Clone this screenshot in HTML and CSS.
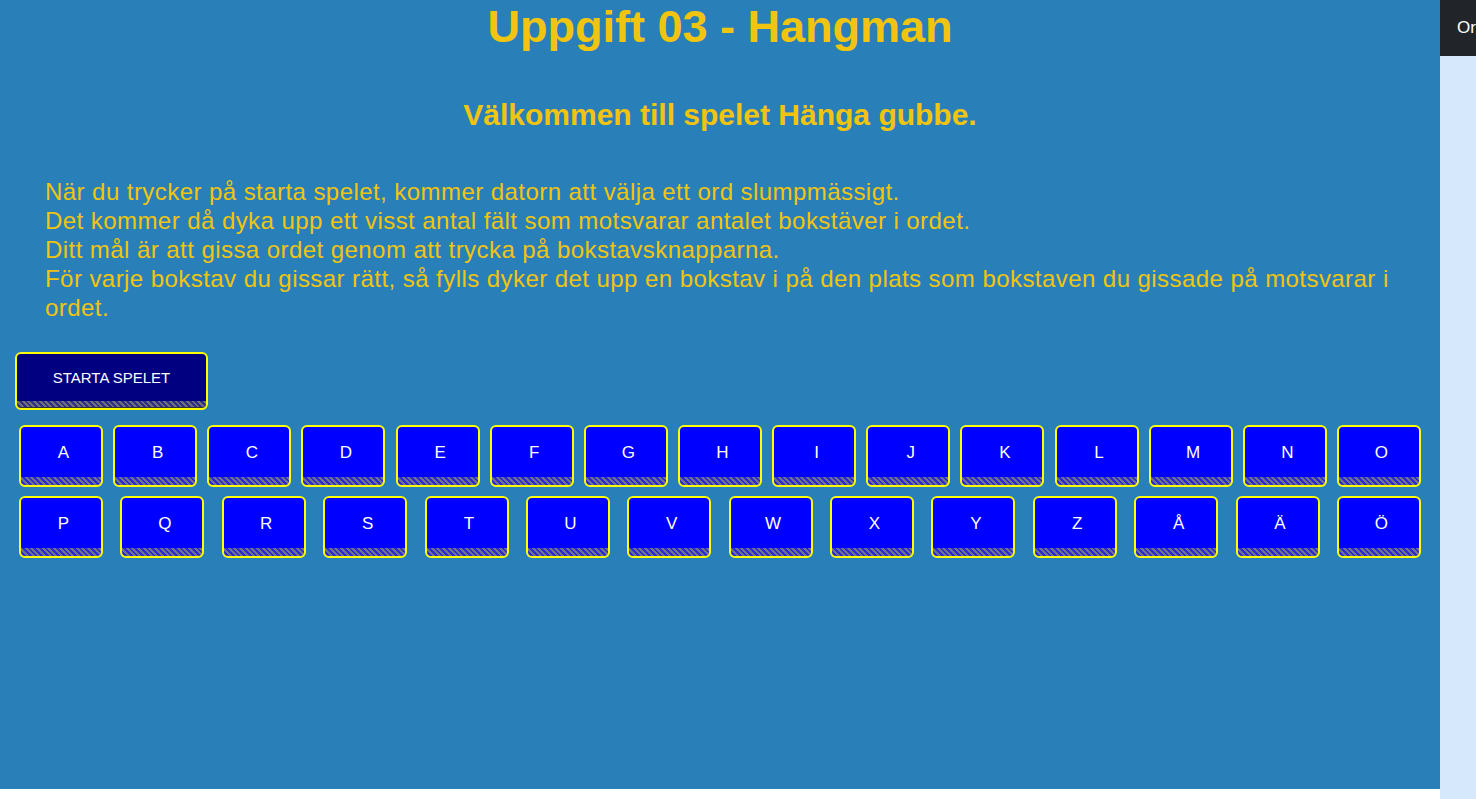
FILE: index.html
```html
<!DOCTYPE html>
<html lang="sv">
<head>
<meta charset="utf-8">
<title>Uppgift 03 - Hangman</title>
<link rel="stylesheet" href="styles.css">
</head>
<body>
<div class="page">
  <main class="main">
    <h1 class="title">Uppgift 03 - Hangman</h1>
    <h2 class="subtitle">Välkommen till spelet Hänga gubbe.</h2>
    <p class="intro">När du trycker på starta spelet, kommer datorn att välja ett ord slumpmässigt.<br>Det kommer då dyka upp ett visst antal fält som motsvarar antalet bokstäver i ordet.<br>Ditt mål är att gissa ordet genom att trycka på bokstavsknapparna.<br>För varje bokstav du gissar rätt, så fylls dyker det upp en bokstav i på den plats som bokstaven du gissade på motsvarar i ordet.</p>
    <div class="start-wrap"><button class="start">STARTA SPELET</button></div>
    <div class="letters">
      <div class="row">
        <button class="key">A</button><button class="key">B</button><button class="key">C</button><button class="key">D</button><button class="key">E</button><button class="key">F</button><button class="key">G</button><button class="key">H</button><button class="key">I</button><button class="key">J</button><button class="key">K</button><button class="key">L</button><button class="key">M</button><button class="key">N</button><button class="key">O</button>
      </div>
      <div class="row">
        <button class="key">P</button><button class="key">Q</button><button class="key">R</button><button class="key">S</button><button class="key">T</button><button class="key">U</button><button class="key">V</button><button class="key">W</button><button class="key">X</button><button class="key">Y</button><button class="key">Z</button><button class="key">Å</button><button class="key">Ä</button><button class="key">Ö</button>
      </div>
    </div>
  </main>
  <aside class="side">
    <div class="side-head">Or</div>
  </aside>
</div>
</body>
</html>
```

FILE: styles.css
```css
html, body {
  margin: 0;
  padding: 0;
  background: #ffffff;
}
body {
  font-family: "Liberation Sans", Arial, sans-serif;
  overflow: hidden;
}
.page {
  display: flex;
  height: 799px;
  align-items: flex-start;
}
.main {
  width: 1440px;
  height: 789px;
  background: #2980b9;
  color: #f1c40f;
  flex: none;
}
.title {
  margin: 0;
  padding-top: 1px;
  font-size: 45px;
  font-weight: bold;
  text-align: center;
  line-height: 52px;
}
.subtitle {
  margin: 44px 0 0;
  font-size: 30px;
  font-weight: bold;
  text-align: center;
  line-height: 35px;
}
.intro {
  margin: 45px 0 0;
  padding: 0 45px;
  font-size: 24px;
  letter-spacing: 0.44px;
  line-height: 29px;
}
.start-wrap {
  margin-top: 30px;
  padding-left: 15px;
}
.start {
  width: 193px;
  height: 58px;
  box-sizing: border-box;
  border: 2px solid #ffff00;
  border-radius: 6px;
  color: #ffffff;
  font-family: "Liberation Sans", Arial, sans-serif;
  font-size: 15px;
  padding: 0 0 7px;
  background:
    repeating-linear-gradient(45deg, #6f6f78 0 2px, #2e2e8a 2px 4px) bottom / 100% 7px no-repeat,
    #000080;
  box-shadow: inset 0 -7px 0 -6px #333;
}
.letters {
  padding: 15px 19px 0;
  display: flex;
  flex-direction: column;
  gap: 9px;
}
.row {
  display: flex;
  justify-content: space-between;
}
.key {
  width: 84px;
  height: 62px;
  box-sizing: border-box;
  border: 2px solid #ffff00;
  border-radius: 6px;
  color: #ffffff;
  font-family: "Liberation Sans", Arial, sans-serif;
  font-size: 17px;
  padding: 0 0 6px 5px;
  background:
    repeating-linear-gradient(45deg, #6f6f90 0 2px, #2a2ad0 2px 4px) bottom / 100% 8px no-repeat,
    #0000ff;
}
.side {
  width: 36px;
  height: 799px;
  background: #d6e9fc;
  flex: none;
}
.side-head {
  height: 56px;
  background: #212529;
  color: #ffffff;
  font-family: "Liberation Sans", Arial, sans-serif;
  font-size: 17px;
  line-height: 56px;
  padding-left: 17px;
  white-space: nowrap;
  overflow: hidden;
}
```
